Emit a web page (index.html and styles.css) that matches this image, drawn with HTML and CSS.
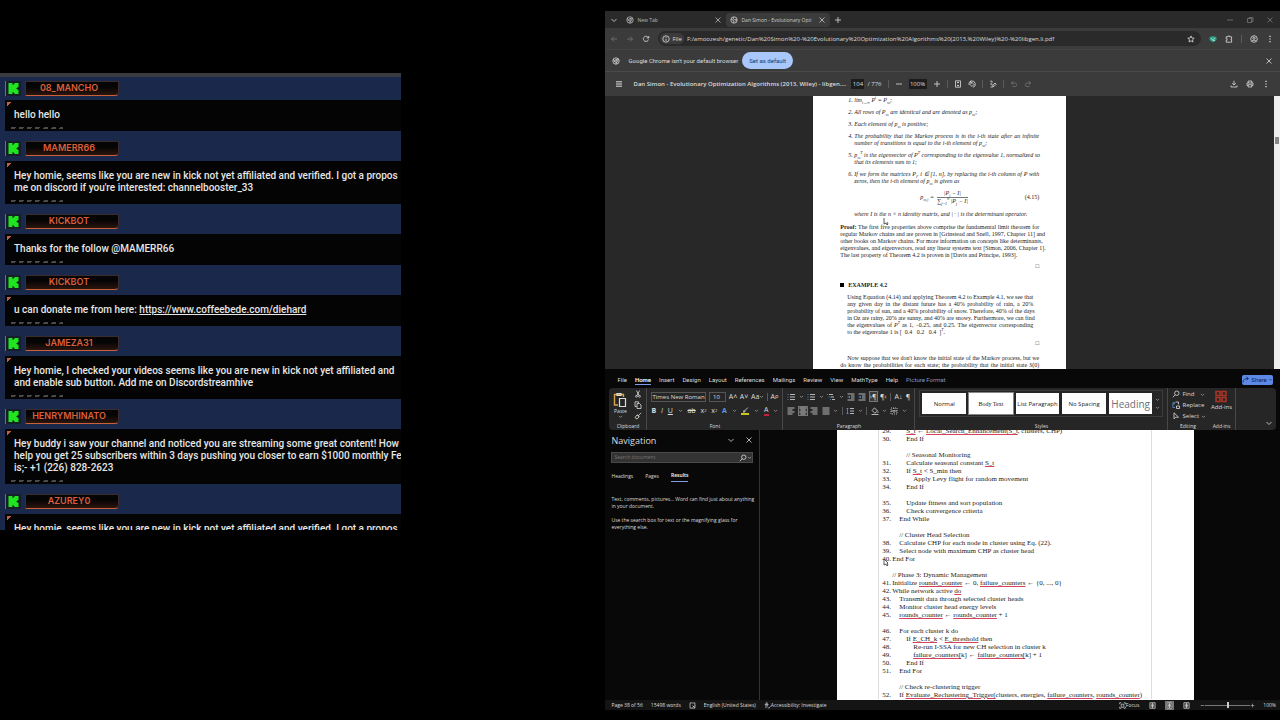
FILE: index.html
```html
<!DOCTYPE html>
<html lang="en">
<head>
    <meta charset="UTF-8">
    <meta name="viewport" content="width=device-width, initial-scale=1.0">
    <title>Stream Layout</title>
    <link rel="stylesheet" href="styles.css">
</head>
<body>
    <svg class="sprite" aria-hidden="true">
        <symbol id="kick" viewBox="0 0 10 11"><path fill="#1fe51f" stroke="none" d="M0 0h4v2h1V1h1V0h4v4H9v1H8v1h1v1h1v4H6v-1H5V9H4v2H0z"/></symbol>
        <symbol id="down" viewBox="0 0 8 8"><path d="M1.500 3l2.500 2.500L6.500 3"/></symbol>
        <symbol id="close" viewBox="0 0 8 8"><path d="M1.500 1.500l5 5M6.500 1.500l-5 5"/></symbol>
        <symbol id="plus" viewBox="0 0 8 8"><path d="M4 1v6M1 4h6"/></symbol>
        <symbol id="minus" viewBox="0 0 8 8"><path d="M1 4h6"/></symbol>
        <symbol id="restore" viewBox="0 0 8 8"><path d="M1.500 2.500h4v4h-4zM3 2.500v-1h4v4H5.500"/></symbol>
        <symbol id="chrome" viewBox="0 0 8 8"><circle cx="4" cy="4" r="3.200"/><circle cx="4" cy="4" r="1.300"/><path d="M4 2.700h2.900M2.900 4.700L1.300 2.200M5.100 4.700L3.800 7.200"/></symbol>
        <symbol id="globe" viewBox="0 0 8 8"><circle cx="4" cy="4" r="3.200"/><path d="M1 3.500l2 .5 1 1-.5 2M4 1l-1 1.500 1.500 1L7 3M5 5l2-.5"/></symbol>
        <symbol id="back" viewBox="0 0 8 8"><path d="M7 4H1.500M4 1.500L1.500 4 4 6.500"/></symbol>
        <symbol id="forward" viewBox="0 0 8 8"><path d="M1 4h5.500M4 1.500L6.500 4 4 6.500"/></symbol>
        <symbol id="reload" viewBox="0 0 8 8"><path d="M6.500 4.500A2.600 2.600 0 1 1 5.800 2L6.700 3M6.800 1v2H4.800"/></symbol>
        <symbol id="info" viewBox="0 0 8 8"><circle cx="4" cy="4" r="3.200"/><path d="M4 3.700V6M4 2v.8"/></symbol>
        <symbol id="star" viewBox="0 0 8 8"><path d="M4 .9l.9 2.100 2.300.2-1.700 1.500.5 2.300-2-1.200L2 7l.5-2.300L.8 3.200l2.300-.2z"/></symbol>
        <symbol id="idm" viewBox="0 0 8 8"><path fill="#2f9c84" stroke="none" d="M.5 2L4 1l3.500 1v3L4 7.500.5 5z"/><path stroke="#b9e5dc" d="M2 3l1.500 2L6 3M4 5.500h2"/></symbol>
        <symbol id="puzzle" viewBox="0 0 8 8"><path d="M1.200 1.800h1.800V1h1.600v.8h2V4H6v1h.6v2.200H1.200V5.300h.9V3.800h-.9z"/></symbol>
        <symbol id="user" viewBox="0 0 8 8"><circle cx="4" cy="4" r="3.300"/><circle cx="4" cy="3.200" r="1.100"/><path d="M1.800 6.300c1-1.500 3.400-1.500 4.400 0"/></symbol>
        <symbol id="dots" viewBox="0 0 8 8"><path stroke-width="1.300" d="M4 .8v1.200M4 3.400v1.200M4 6v1.200"/></symbol>
        <symbol id="menu" viewBox="0 0 8 8"><path stroke-width="1" d="M1 1.800h6M1 4h6M1 6.200h6"/></symbol>
        <symbol id="fit" viewBox="0 0 8 8"><path d="M1.500.8h5v6.400h-5zM4 1.800v1.400M4 4.800v1.400M3 3l1-1 1 1M3 5l1 1 1-1"/></symbol>
        <symbol id="rotate" viewBox="0 0 8 8"><path d="M4 2.500L6 4.500 4 6.500 2 4.500zM1 5a3.200 3.200 0 1 1 4 2.300M3.200.5L2 2l2 1"/></symbol>
        <symbol id="draw" viewBox="0 0 8 8"><path d="M1 1.500c2-1 3 0 1.500 1.500S2 5 3.500 4.500M3.500 6.800L4 5l2-2 1.200 1.200-2 2zM1.500 7h2"/></symbol>
        <symbol id="undo" viewBox="0 0 8 8"><path d="M3 1.200L1.300 3 3 4.800M1.300 3H5c2.200 0 2.200 3.500 0 3.500H2.500"/></symbol>
        <symbol id="redo" viewBox="0 0 8 8"><path d="M5 1.200L6.700 3 5 4.800M6.700 3H3C.8 3 .8 6.500 3 6.500h2.500"/></symbol>
        <symbol id="download" viewBox="0 0 8 8"><path d="M4 .8v4M2.200 3.200L4 5l1.800-1.800M1 5.500V7h6V5.500"/></symbol>
        <symbol id="print" viewBox="0 0 8 8"><path d="M2.200 3V1h3.600v2M2.200 5.500H1V3h6v2.500H5.800M2.200 4.700h3.600V7H2.200z"/></symbol>
        <symbol id="paste" viewBox="0 0 14 16"><path stroke="#d7a64a" stroke-width="1.400" d="M5 13H1.500V2.500h9V5"/><path stroke-width="1.200" d="M4 3.500v-2h4v2zM6.500 6.500h6v8h-6z"/></symbol>
        <symbol id="cut" viewBox="0 0 8 8"><path d="M2.500.5l2.500 5M5.500.5L3 5.500"/><circle cx="2.500" cy="6.300" r=".9"/><circle cx="5.500" cy="6.300" r=".9"/></symbol>
        <symbol id="copy" viewBox="0 0 8 8"><path d="M2.500 5.500H1V.8h3.500V2M3 2.500h2.500L7 4v3.500H3z"/></symbol>
        <symbol id="brush" viewBox="0 0 8 8"><path d="M7.200.8L5 3M3.500 2.500l2 2M3 3L1 5.500 3 7l2-2z"/><path stroke="#d7a64a" d="M1.500 6L3 7"/></symbol>
        <symbol id="list" viewBox="0 0 8 8"><path d="M3 1.500h5M3 4h5M3 6.500h5"/><path stroke="#5b93d6" d="M.5 1.500h1M.5 4h1M.5 6.500h1"/></symbol>
        <symbol id="levels" viewBox="0 0 8 8"><path d="M2 1.500h4M3.500 4H7M5 6.500h3"/><path stroke="#5b93d6" d="M0 1.500h1M1.500 4h1M3 6.500h1"/></symbol>
        <symbol id="indent" viewBox="0 0 8 8"><path d="M.5 1h7M4 3h3.500M4 5h3.500M.5 7h7"/><path stroke="#5b93d6" d="M.5 4H3M2 3l1 1-1 1"/></symbol>
        <symbol id="left" viewBox="0 0 8 8"><path d="M.5 1h7M.5 3h5M.5 5h7M.5 7h5"/></symbol>
        <symbol id="center" viewBox="0 0 8 8"><path d="M.5 1h7M1.500 3h5M.5 5h7M1.500 7h5"/></symbol>
        <symbol id="right" viewBox="0 0 8 8"><path d="M.5 1h7M2.500 3h5M.5 5h7M2.500 7h5"/></symbol>
        <symbol id="justify" viewBox="0 0 8 8"><path d="M.5 1h7M.5 3h7M.5 5h7M.5 7h7"/></symbol>
        <symbol id="spacing" viewBox="0 0 8 8"><path d="M4 1.500h4M4 4h4M4 6.500h4"/><path stroke="#5b93d6" d="M1.500 1v6M.5 2l1-1 1 1M.5 6l1 1 1-1"/></symbol>
        <symbol id="bucket" viewBox="0 0 8 8"><path d="M3.500.8L6.500 4 3.800 6.200 1.200 3.500zM7 4.500v1.300M.5 7.500h7"/></symbol>
        <symbol id="borders" viewBox="0 0 8 8"><path stroke-dasharray="1 1" d="M1 1h6v6H1zM4 1v6"/><path d="M1 4h6"/></symbol>
        <symbol id="pen" viewBox="0 0 8 8"><path d="M6.800.6L3.500 4M3 3.500l1.200 1.200L2.500 5.300z"/><path stroke="#f2f21a" stroke-width="1.600" d="M0 7h8"/></symbol>
        <symbol id="search" viewBox="0 0 8 8"><circle cx="4.800" cy="3.200" r="2.200"/><path d="M3.200 4.800L.8 7.200"/></symbol>
        <symbol id="replace" viewBox="0 0 8 8"><path d="M3.500 1h3v2.500M4.500 5h3v2.500h-3z"/><path stroke="#5b93d6" d="M.8 3v3.500H3M1 1.500h1.500V3H1z"/></symbol>
        <symbol id="pointer" viewBox="0 0 8 8"><path d="M2 .8v6L3.800 5.200H6.500z"/></symbol>
        <symbol id="addins" viewBox="0 0 12 12"><path stroke="#a93426" stroke-width="1.600" d="M1 1h4v4H1zM7 1h4v4H7zM1 7h4v4H1zM7 7h4v4H7z"/></symbol>
        <symbol id="share" viewBox="0 0 8 8"><path d="M1 6.500c0-3 2-4 5-4M4.500.8l2 1.700-2 1.700"/></symbol>
        <symbol id="proof" viewBox="0 0 8 8"><path d="M1.200 1h2.500l.8.500.8-.5h1.500v6H1.200zM4 4l2.500 2.500M6.500 4L4 6.500"/></symbol>
        <symbol id="access" viewBox="0 0 8 8"><circle cx="3" cy="1.500" r=".8"/><path d="M.8 3h4.400M2.300 3v4M3.800 3v2M4.500 6l1 1.200L7.500 5"/></symbol>
        <symbol id="focus" viewBox="0 0 8 8"><path d="M.8 2.500V.8h1.700M5.500.8h1.700v1.700M7.200 5.500v1.700H5.500M2.500 7.200H.8V5.500M2.500 2.500h3v3.500h-3z"/></symbol>
        <symbol id="page" viewBox="0 0 8 8"><path d="M1 .8h6v6.400H1zM4 1v6M2 2.500h4M2 4h4M2 5.500h4"/></symbol>
    </svg>

    <main class="stage">
        <section class="chat" aria-label="Chat">
            <article class="message">
                <header><svg class="kick"><use href="#kick"/></svg><h2>08_MANCHO</h2></header>
                <p>hello hello</p>
            </article>
            <article class="message">
                <header><svg class="kick"><use href="#kick"/></svg><h2>MAMERR66</h2></header>
                <p>Hey homie, seems like you are new in kick not yet affiliated and verified. I got a propos<br>me on discord if you're interested: channelbooster_33</p>
            </article>
            <article class="message">
                <header><svg class="kick"><use href="#kick"/></svg><h2>KICKBOT</h2></header>
                <p>Thanks for the follow @MAMERR66</p>
            </article>
            <article class="message">
                <header><svg class="kick"><use href="#kick"/></svg><h2>KICKBOT</h2></header>
                <p>u can donate me from here: <a href="https://www.coffeebede.com/diehard">https://www.coffeebede.com/diehard</a></p>
            </article>
            <article class="message">
                <header><svg class="kick"><use href="#kick"/></svg><h2>JAMEZA31</h2></header>
                <p>Hey homie, I checked your videos seems like you are new in kick not yet affiliated and<br>and enable sub button. Add me on Discordstreamhive</p>
            </article>
            <article class="message">
                <header><svg class="kick"><use href="#kick"/></svg><h2>HENRYMHINATO</h2></header>
                <p>Hey buddy i saw your channel and noticed you are streaming some great content! How<br>help you get 25 subscribers within 3 days pushing you closer to earn $1000 monthly Fe<br>is;- +1 (226) 828-2623</p>
            </article>
            <article class="message">
                <header><svg class="kick"><use href="#kick"/></svg><h2>AZUREY0</h2></header>
                <p>Hey homie, seems like you are new in kick not yet affiliated and verified. I got a propos</p>
            </article>
        </section>

        <div class="desktop">
            <section class="browser" aria-label="Browser">
                <div class="tab-strip">
                    <button class="tab-search" aria-label="Search tabs"><svg><use href="#down"/></svg></button>
                    <div class="tab"><svg><use href="#chrome"/></svg><span>New Tab</span><button aria-label="Close tab"><svg><use href="#close"/></svg></button></div>
                    <div class="tab active"><svg><use href="#globe"/></svg><span>Dan Simon - Evolutionary Opti</span><button aria-label="Close tab"><svg><use href="#close"/></svg></button></div>
                    <button class="new-tab" aria-label="New tab"><svg><use href="#plus"/></svg></button>
                    <div class="window-buttons">
                        <button aria-label="Minimize"><svg><use href="#minus"/></svg></button>
                        <button aria-label="Restore"><svg><use href="#restore"/></svg></button>
                        <button aria-label="Close"><svg><use href="#close"/></svg></button>
                    </div>
                </div>
                <div class="toolbar">
                    <button class="dim" aria-label="Back"><svg><use href="#back"/></svg></button>
                    <button class="dim" aria-label="Forward"><svg><use href="#forward"/></svg></button>
                    <button aria-label="Reload"><svg><use href="#reload"/></svg></button>
                    <div class="address">
                        <label for="url"><svg><use href="#info"/></svg>File</label>
                        <input id="url" type="text" value="F:/amoozesh/genetic/Dan%20Simon%20-%20Evolutionary%20Optimization%20Algorithms%20(2013,%20Wiley)%20-%20libgen.li.pdf">
                        <button aria-label="Bookmark"><svg><use href="#star"/></svg></button>
                    </div>
                    <button aria-label="Download manager"><svg><use href="#idm"/></svg></button>
                    <button aria-label="Extensions"><svg><use href="#puzzle"/></svg></button>
                    <i class="bar"></i>
                    <button aria-label="Profile"><svg><use href="#user"/></svg></button>
                    <button aria-label="Menu"><svg><use href="#dots"/></svg></button>
                </div>
                <div class="infobar">
                    <svg><use href="#chrome"/></svg>
                    <span>Google Chrome isn't your default browser</span>
                    <button class="default-button">Set as default</button>
                    <button class="end" aria-label="Dismiss"><svg><use href="#close"/></svg></button>
                </div>
                <div class="pdf-bar">
                    <button aria-label="Sidebar"><svg><use href="#menu"/></svg></button>
                    <h1>Dan Simon - Evolutionary Optimization Algorithms (2013, Wiley) - libgen....</h1>
                    <div class="pdf-tools">
                        <input class="page-number" type="text" value="104" aria-label="Page number"><span>/ 776</span>
                        <i class="bar"></i>
                        <button aria-label="Zoom out"><svg><use href="#minus"/></svg></button>
                        <input type="text" value="100%" aria-label="Zoom">
                        <button aria-label="Zoom in"><svg><use href="#plus"/></svg></button>
                        <i class="bar"></i>
                        <button aria-label="Fit to page"><svg><use href="#fit"/></svg></button>
                        <button aria-label="Rotate"><svg><use href="#rotate"/></svg></button>
                        <i class="bar"></i>
                        <button aria-label="Draw"><svg><use href="#draw"/></svg></button>
                        <i class="bar"></i>
                        <button class="dim" aria-label="Undo"><svg><use href="#undo"/></svg></button>
                        <button class="dim" aria-label="Redo"><svg><use href="#redo"/></svg></button>
                    </div>
                    <div class="pdf-actions">
                        <button aria-label="Download"><svg><use href="#download"/></svg></button>
                        <button aria-label="Print"><svg><use href="#print"/></svg></button>
                        <button aria-label="More"><svg><use href="#dots"/></svg></button>
                    </div>
                </div>
                <div class="pdf-view">
                    <div class="pdf-page">
                        <ol>
                            <li>lim<sub>i→∞</sub> P<sup>i</sup> = P<sub>ss</sub>;</li>
                            <li>All rows of P<sub>ss</sub> are identical and are denoted as p<sub>ss</sub>;</li>
                            <li>Each element of p<sub>ss</sub> is positive;</li>
                            <li><span class="full">The probability that the Markov process is in the i-th state after an infinite</span>number of transitions is equal to the i-th element of p<sub>ss</sub>;</li>
                            <li><span class="full">p<sub>ss</sub><sup>T</sup> is the eigenvector of P<sup>T</sup> corresponding to the eigenvalue 1, normalized so</span>that its elements sum to 1;</li>
                            <li><span class="full">If we form the matrices P<sub>i</sub>, i ∈ [1, n], by replacing the i-th column of P with</span>zeros, then the i-th element of p<sub>ss</sub> is given as</li>
                        </ol>
                        <div class="equation">
                            <em>p<sub>ss,i</sub> =</em>
                            <em class="fraction"><span>|P<sub>i</sub> − I|</span><span>∑<sub>j=1</sub><sup>n</sup> |P<sub>j</sub> − I|</span></em>
                            <span class="number">(4.15)</span>
                        </div>
                        <p class="where">where I is the n × n identity matrix, and | · | is the determinant operator.</p>
                        <p>
                            <span class="full"><b>Proof:</b> The first five properties above comprise the fundamental limit theorem for</span>
                            <span class="full">regular Markov chains and are proven in [Grinstead and Snell, 1997, Chapter 11] and</span>
                            <span class="full">other books on Markov chains. For more information on concepts like determinants,</span>
                            <span class="full">eigenvalues, and eigenvectors, read any linear systems text [Simon, 2006, Chapter 1].</span>
                            The last property of Theorem 4.2 is proven in [Davis and Principe, 1993].
                        </p>
                        <div class="qed">□</div>
                        <h3>EXAMPLE 4.2</h3>
                        <p class="example">
                            <span class="full">Using Equation (4.14) and applying Theorem 4.2 to Example 4.1, we see that</span>
                            <span class="full">any given day in the distant future has a 40% probability of rain, a 20%</span>
                            <span class="full">probability of sun, and a 40% probability of snow. Therefore, 40% of the days</span>
                            <span class="full">in Oz are rainy, 20% are sunny, and 40% are snowy. Furthermore, we can find</span>
                            <span class="full">the eigenvalues of <em>P<sup>T</sup></em> as 1, −0.25, and 0.25. The eigenvector corresponding</span>
                            to the eigenvalue 1 is [ &nbsp;0.4 &nbsp; 0.2 &nbsp; 0.4 &nbsp;]<em><sup>T</sup></em>.
                        </p>
                        <div class="qed">□</div>
                        <p>
                            <span class="full indented">Now suppose that we don't know the initial state of the Markov process, but we</span>
                            <span class="full">do know the probabilities for each state; the probability that the initial state <em>S</em>(0)</span>
                        </p>
                        <svg class="cursor beam" viewBox="0 0 6 8"><path d="M1 0v6l2-1 1 2 1-1-1-2"/></svg>
                    </div>
                    <div class="pdf-scroll"><i></i></div>
                </div>
            </section>

            <section class="word" aria-label="Word">
                <nav class="menu">
                    <button>File</button>
                    <button class="current">Home</button>
                    <button>Insert</button>
                    <button>Design</button>
                    <button>Layout</button>
                    <button>References</button>
                    <button>Mailings</button>
                    <button>Review</button>
                    <button>View</button>
                    <button>MathType</button>
                    <button>Help</button>
                    <button class="context">Picture Format</button>
                    <button class="share"><svg><use href="#share"/></svg>Share<svg class="caret"><use href="#down"/></svg></button>
                </nav>
                <div class="ribbon">
                    <div class="group clipboard">
                        <div class="tools">
                            <button class="paste"><svg><use href="#paste"/></svg>Paste<svg class="caret"><use href="#down"/></svg></button>
                            <div class="stack">
                                <button aria-label="Cut"><svg><use href="#cut"/></svg></button>
                                <button aria-label="Copy"><svg><use href="#copy"/></svg></button>
                                <button aria-label="Format painter"><svg><use href="#brush"/></svg></button>
                            </div>
                        </div>
                        <div class="caption">Clipboard</div>
                    </div>
                    <div class="group font">
                        <div class="rows">
                            <div class="row">
                                <select class="family" aria-label="Font"><option>Times New Roman</option></select>
                                <select class="size" aria-label="Font size"><option>10</option></select>
                                <button>A˄</button>
                                <button>A˅</button>
                                <button>Aa<svg class="caret"><use href="#down"/></svg></button>
                                <i class="bar"></i>
                                <button>A<small>ρ</small></button>
                            </div>
                            <div class="row">
                                <button><b>B</b></button>
                                <button><em>I</em></button>
                                <button><u>U</u></button>
                                <svg class="caret"><use href="#down"/></svg>
                                <button><s>ab</s></button>
                                <button>x<sub>2</sub></button>
                                <button>x<sup>2</sup></button>
                                <button class="effects">A</button>
                                <svg class="caret"><use href="#down"/></svg>
                                <button aria-label="Highlight"><svg><use href="#pen"/></svg></button>
                                <svg class="caret"><use href="#down"/></svg>
                                <button class="font-color">A</button>
                                <svg class="caret"><use href="#down"/></svg>
                            </div>
                        </div>
                        <div class="caption">Font</div>
                    </div>
                    <div class="group paragraph">
                        <div class="rows">
                            <div class="row">
                                <button aria-label="Bullets"><svg><use href="#list"/></svg></button>
                                <svg class="caret"><use href="#down"/></svg>
                                <button aria-label="Numbering"><svg><use href="#list"/></svg></button>
                                <svg class="caret"><use href="#down"/></svg>
                                <button aria-label="Multilevel list"><svg><use href="#levels"/></svg></button>
                                <svg class="caret"><use href="#down"/></svg>
                                <button aria-label="Decrease indent"><svg><use href="#indent"/></svg></button>
                                <button aria-label="Increase indent"><svg><use href="#indent"/></svg></button>
                                <button class="pressed">›¶</button>
                                <button>¶‹</button>
                                <i class="bar"></i>
                                <button>A↓</button>
                                <button>¶</button>
                            </div>
                            <div class="row">
                                <button aria-label="Align left"><svg><use href="#left"/></svg></button>
                                <button class="pressed" aria-label="Center"><svg><use href="#center"/></svg></button>
                                <button aria-label="Align right"><svg><use href="#right"/></svg></button>
                                <button aria-label="Justify"><svg><use href="#justify"/></svg></button>
                                <svg class="caret"><use href="#down"/></svg>
                                <i class="bar"></i>
                                <button aria-label="Line spacing"><svg><use href="#spacing"/></svg></button>
                                <svg class="caret"><use href="#down"/></svg>
                                <i class="bar"></i>
                                <button aria-label="Shading"><svg><use href="#bucket"/></svg></button>
                                <svg class="caret"><use href="#down"/></svg>
                                <button aria-label="Borders"><svg><use href="#borders"/></svg></button>
                                <svg class="caret"><use href="#down"/></svg>
                                <i></i>
                            </div>
                        </div>
                        <div class="caption">Paragraph</div>
                    </div>
                    <div class="group styles">
                        <div class="gallery">
                            <button>Normal</button>
                            <button class="serif">Body Text</button>
                            <button>List Paragraph</button>
                            <button>No Spacing</button>
                            <button class="heading">Heading</button>
                            <div class="gallery-scroll">
                                <svg class="caret"><use href="#down"/></svg>
                                <svg class="caret"><use href="#down"/></svg>
                            </div>
                        </div>
                        <div class="caption">Styles</div>
                    </div>
                    <div class="group editing">
                        <div class="stack">
                            <button><svg><use href="#search"/></svg>Find &nbsp;<svg class="caret"><use href="#down"/></svg></button>
                            <button><svg><use href="#replace"/></svg>Replace</button>
                            <button><svg><use href="#pointer"/></svg>Select<svg class="caret"><use href="#down"/></svg></button>
                        </div>
                        <div class="caption">Editing</div>
                    </div>
                    <div class="group addins">
                        <button><svg><use href="#addins"/></svg>Add-ins</button>
                        <div class="caption">Add-ins</div>
                    </div>
                    <button class="collapse" aria-label="Collapse ribbon"><svg><use href="#down"/></svg></button>
                </div>
                <div class="workspace">
                    <aside class="navigation">
                        <div class="title">
                            <h2>Navigation</h2>
                            <button aria-label="Options"><svg><use href="#down"/></svg></button>
                            <button aria-label="Close"><svg><use href="#close"/></svg></button>
                        </div>
                        <div class="search">
                            <input type="text" placeholder="Search document" aria-label="Search document">
                            <button aria-label="Search"><svg><use href="#search"/></svg></button>
                            <svg class="caret"><use href="#down"/></svg>
                        </div>
                        <div class="nav-tabs">
                            <button>Headings</button>
                            <button>Pages</button>
                            <button class="current">Results</button>
                        </div>
                        <p>Text, comments, pictures... Word can find just about anything<br>in your document.</p>
                        <p>Use the search box for text or the magnifying glass for<br>everything else.</p>
                    </aside>
                    <div class="canvas">
                        <div class="sheet">
                            <div class="code">
                                <div class="line in2"><b>29.</b><span><u>S_t</u> ← <u>Local_Search_Enhancement(S_t</u>, clusters, CHP)</span></div>
                                <div class="line in2"><b>30.</b><span>End If</span></div>
                                <div class="line"></div>
                                <div class="line in2"><b></b><span>// Seasonal Monitoring</span></div>
                                <div class="line in2"><b>31.</b><span>Calculate seasonal constant <u>S_t</u></span></div>
                                <div class="line in2"><b>32.</b><span>If <u>S_t</u> &lt; S_min then</span></div>
                                <div class="line in3"><b>33.</b><span>Apply Levy flight for random movement</span></div>
                                <div class="line in2"><b>34.</b><span>End If</span></div>
                                <div class="line"></div>
                                <div class="line in2"><b>35.</b><span>Update fitness and sort population</span></div>
                                <div class="line in2"><b>36.</b><span>Check convergence criteria</span></div>
                                <div class="line in1"><b>37.</b><span>End While</span></div>
                                <div class="line"></div>
                                <div class="line in1"><b></b><span>// Cluster Head Selection</span></div>
                                <div class="line in1"><b>38.</b><span>Calculate CHP for each node in cluster using Eq. (22).</span></div>
                                <div class="line in1"><b>39.</b><span>Select node with maximum CHP as cluster head</span></div>
                                <div class="line"><b>40.</b><span>End For</span></div>
                                <div class="line"></div>
                                <div class="line"><b></b><span>// Phase 3: Dynamic Management</span></div>
                                <div class="line"><b>41.</b><span>Initialize <u>rounds_counter</u> ← 0, <u>failure_counters</u> ← {0, ..., 0}</span></div>
                                <div class="line"><b>42.</b><span>While network active <u>do</u></span></div>
                                <div class="line in1"><b>43.</b><span>Transmit data through selected cluster heads</span></div>
                                <div class="line in1"><b>44.</b><span>Monitor cluster head energy levels</span></div>
                                <div class="line in1"><b>45.</b><span><u>rounds_counter</u> ← <u>rounds_counter</u> + 1</span></div>
                                <div class="line"></div>
                                <div class="line in1"><b>46.</b><span>For each cluster k do</span></div>
                                <div class="line in2"><b>47.</b><span>If <u>E_CH_k</u> &lt; <u>E_threshold</u> then</span></div>
                                <div class="line in3"><b>48.</b><span>Re-run I-SSA for new CH selection in cluster k</span></div>
                                <div class="line in3"><b>49.</b><span><u>failure_counters[</u>k] ← <u>failure_counters[</u>k] + 1</span></div>
                                <div class="line in2"><b>50.</b><span>End If</span></div>
                                <div class="line in1"><b>51.</b><span>End For</span></div>
                                <div class="line"></div>
                                <div class="line in1"><b></b><span>// Check re-clustering trigger</span></div>
                                <div class="line in1"><b>52.</b><span>If <u>Evaluate_Reclustering_Trigger(</u>clusters, energies, <u>failure_counters</u>, <u>rounds_counter</u>)</span></div>
                            </div>
                            <svg class="cursor arrow" viewBox="0 0 6 8"><path d="M1 0v6l2-1 1 2 1-1-1-2h1z"/></svg>
                        </div>
                    </div>
                </div>
                <footer class="status">
                    <span>Page 38 of 56</span>
                    <span>15498 words</span>
                    <svg><use href="#proof"/></svg>
                    <span>English (United States)</span>
                    <span class="with-icon"><svg><use href="#access"/></svg>Accessibility: Investigate</span>
                    <div class="views">
                        <button><svg><use href="#focus"/></svg>Focus</button>
                        <button aria-label="Read mode"><svg><use href="#page"/></svg></button>
                        <button class="pressed" aria-label="Print layout"><svg><use href="#page"/></svg></button>
                        <button aria-label="Web layout"><svg><use href="#page"/></svg></button>
                        <div class="zoom">
                            <button aria-label="Zoom out"><svg class="caret"><use href="#minus"/></svg></button>
                            <input type="range" min="0" max="100" value="50" aria-label="Zoom">
                            <button aria-label="Zoom in"><svg class="caret"><use href="#plus"/></svg></button>
                        </div>
                    </div>
                    <span>100%</span>
                </footer>
            </section>
        </div>
    </main>
</body>
</html>
```
FILE: styles.css
```css
* {
    box-sizing: border-box;
}
body {
    margin: 0;
    background-color: #000;
    color: #ddd;
    font-family: "Open Sans", sans-serif;
    font-size: 6px;
}
h1, h2, h3, p, ol {
    margin: 0;
    padding: 0;
    font-size: inherit;
}
button, input, select {
    margin: 0;
    padding: 0;
    border: 0;
    background: none;
    color: inherit;
    font: inherit;
    min-width: 0;
    appearance: none;
}
button {
    display: flex;
    align-items: center;
    justify-content: center;
    white-space: nowrap;
}
svg {
    width: 8px;
    height: 8px;
    flex: none;
    fill: none;
    stroke: currentColor;
    stroke-width: 0.8;
}
sub, sup {
    font-size: 4px;
    line-height: 0;
}
.sprite {
    position: absolute;
    width: 0;
    height: 0;
}
.stage {
    display: grid;
    grid-template-columns: 401fr 675fr;
    column-gap: 16%;
    height: 100vh;
}

/* chat */
.chat {
    margin: 73px 0 190px;
    border-top: 4px solid #383c41;
    background-color: #1a294b;
    overflow: hidden;
}
.message header {
    display: flex;
    align-items: center;
    height: 30px;
    padding: 5px 0 0 5px;
}
.message:first-child header {
    height: 23px;
    padding-top: 0;
}
.kick {
    width: 16px;
    height: 15px;
    padding: 2px;
    border-left: 1px solid #b5583a;
    background-color: #16202a;
}
.message h2 {
    width: 94px;
    height: 15px;
    margin-left: 4px;
    padding-right: 6px;
    border: 1px solid #3a2c2c;
    border-bottom: 1px solid #c8613a;
    border-radius: 0 0 4px 0;
    background: linear-gradient(#050505 40%, #2b150e);
    color: #dc5f3a;
    font: 600 9px/12px Inter, sans-serif;
    text-align: center;
}
.message p {
    margin-left: 5px;
    padding: 9px 0 10px 9px;
    background:
        linear-gradient(135deg, #c0603f 3px, transparent 3px) 2px 2px / 4px 4px no-repeat,
        repeating-linear-gradient(120deg, transparent 0 3px, #4a4a4a 3px 7px) 3px calc(100% - 2px) / 55px 2px no-repeat,
        #040404;
    color: #e6e6e6;
    font: 500 10px/12px Roboto, sans-serif;
    white-space: nowrap;
}
.message a {
    color: inherit;
}

/* desktop capture */
.desktop {
    display: flex;
    flex-direction: column;
    min-width: 0;
    padding: 11px 0 10px;
}
.browser {
    display: flex;
    flex-direction: column;
    flex: 358 1 0;
    min-height: 0;
    background-color: #3b3b3b;
}
.bar {
    width: 1px;
    height: 8px;
    background-color: #5a5a5a;
}
.dim {
    color: #777;
}
.tab-strip {
    display: flex;
    align-items: center;
    height: 17px;
    padding-left: 5px;
    background-color: #2a2a2a;
    font-size: 5px;
}
.tab {
    display: flex;
    align-items: center;
    gap: 3px;
    width: 104px;
    height: 14px;
    padding: 0 4px;
    border-radius: 4px;
    color: #bbb;
}
.tab.active {
    background-color: #3b3b3b;
    color: #ccc;
}
.tab span {
    flex: 1;
    white-space: nowrap;
}
.tab-search {
    margin-right: 4px;
}
.new-tab {
    margin-left: 4px;
}
.window-buttons {
    display: flex;
    gap: 12px;
    margin-left: auto;
    padding-right: 6px;
    color: #777;
}
.toolbar {
    display: flex;
    align-items: center;
    gap: 8px;
    height: 21px;
    padding: 0 6px 0 5px;
}
.address {
    display: flex;
    flex: 1;
    align-items: center;
    gap: 3px;
    height: 15px;
    padding: 0 6px 0 2px;
    border-radius: 8px;
    background-color: #2a2a2a;
}
.address label {
    display: flex;
    align-items: center;
    gap: 2px;
    height: 11px;
    padding: 0 2px;
    border-radius: 6px;
    background-color: #3b3b3b;
}
.address input {
    flex: 1;
}
.infobar {
    display: flex;
    align-items: center;
    height: 23px;
    padding: 0 7px;
    border-bottom: 1px solid #4a4a4a;
    border-top: 1px solid #444;
    font-family: Roboto, sans-serif;
}
.infobar span {
    margin: 0 4px 0 8px;
}
.default-button {
    height: 17px;
    padding: 0 7px;
    border-radius: 9px;
    background-color: #a8c7fa;
    color: #173a70;
}
.infobar .end {
    margin-left: auto;
}
.pdf-bar {
    display: grid;
    grid-template-columns: 10px 209px 1fr auto;
    align-items: center;
    column-gap: 9px;
    height: 24px;
    padding: 0 10px 0 9px;
}
.pdf-bar h1 {
    font-weight: 600;
    white-space: nowrap;
}
.pdf-tools, .pdf-actions {
    display: flex;
    align-items: center;
    gap: 6px;
}
.pdf-actions {
    gap: 8px;
}
.pdf-tools input {
    width: 18px;
    height: 10px;
    background-color: #1c1c1c;
    text-align: center;
}
.pdf-tools .page-number {
    width: 13px;
    margin-right: -3px;
}
.pdf-view {
    display: flex;
    flex: 1;
    min-height: 0;
    justify-content: center;
    background-color: #282828;
}
.pdf-page {
    position: relative;
    width: 253px;
    margin: 0 auto;
    padding: 0 27px;
    background-color: #fff;
    color: #222;
    font: 6px/7px "Liberation Serif", serif;
    white-space: nowrap;
    overflow: hidden;
}
.pdf-page ol {
    padding: 1px 0 0 14px;
    font-style: italic;
}
.pdf-page li {
    margin-bottom: 5px;
}
.full {
    display: block;
    text-align: justify;
    text-align-last: justify;
}
.equation {
    display: flex;
    align-items: center;
    gap: 3px;
    margin-bottom: 6px;
    padding-left: 80px;
}
.fraction {
    display: flex;
    flex-direction: column;
    align-items: center;
}
.fraction span:first-child {
    width: 100%;
    border-bottom: 1px solid #777;
    text-align: center;
}
.equation .number {
    margin-left: auto;
}
.where {
    margin-bottom: 6px;
    padding-left: 14px;
    font-style: italic;
}
.qed {
    margin: 4px 0 8px;
    text-align: right;
}
.pdf-page h3 {
    margin: 12px 0 5px;
    font-weight: bold;
}
.pdf-page h3::before {
    content: "";
    display: inline-block;
    width: 4px;
    height: 4px;
    margin-right: 4px;
    background-color: #000;
}
.example {
    padding: 0 6px 0 7px;
}
.indented {
    padding-left: 7px;
}
.pdf-scroll {
    width: 6px;
    padding: 41px 1px 0;
    background-color: #eee;
}
.pdf-scroll i {
    display: block;
    height: 7px;
    background-color: #888;
}
.cursor {
    position: absolute;
    width: 6px;
    height: 8px;
    fill: #fff;
    stroke: #333;
}
.beam {
    left: 70px;
    top: 122px;
}
.arrow {
    left: 46px;
    top: 129px;
}

/* word */
.word {
    display: flex;
    flex-direction: column;
    flex: 341 1 0;
    min-height: 0;
    background-color: #080808;
}
.menu {
    display: flex;
    align-items: center;
    gap: 8px;
    height: 19px;
    padding: 2px 7px 0 12px;
    font-family: Roboto, sans-serif;
}
.menu button {
    height: 10px;
}
.menu .current, .nav-tabs .current {
    border-bottom: 1px solid #7f9bea;
    color: #fff;
    font-weight: 600;
}
.menu .context {
    color: #8f93bd;
}
.menu .share {
    gap: 1px;
    width: 31px;
    margin-left: auto;
    border-radius: 2px;
    background-color: #5c88e6;
    color: #102047;
}
.caret {
    width: 5px;
    height: 5px;
}
.ribbon {
    display: flex;
    height: 42px;
    margin: 0 4px;
    border-radius: 4px;
    background-color: #262626;
}
.group {
    display: flex;
    flex-direction: column;
    justify-content: space-between;
    padding: 2px 4px 1px;
    border-right: 1px solid #484848;
}
.caption {
    font-size: 5px;
    line-height: 6px;
    text-align: center;
}
.clipboard {
    width: 38px;
}
.tools {
    display: flex;
    justify-content: space-between;
}
.stack {
    display: flex;
    flex-direction: column;
    gap: 3px;
}
.stack button {
    justify-content: flex-start;
    gap: 2px;
    height: 8px;
}
.paste {
    flex-direction: column;
    font-size: 5px;
    line-height: 6px;
}
.paste svg:first-child {
    width: 14px;
    height: 16px;
}
.rows {
    display: flex;
    flex-direction: column;
    gap: 3px;
    padding-top: 1px;
}
.row {
    display: flex;
    align-items: center;
    justify-content: space-between;
    height: 11px;
}
.row button {
    font-size: 7px;
    line-height: 9px;
}
.font {
    width: 136px;
}
.paragraph {
    width: 132px;
}
.row select {
    height: 10px;
    border: 1px solid #555;
    font-size: 6px;
    line-height: 8px;
}
.family {
    width: 55px;
}
.size {
    width: 17px;
    padding-left: 3px;
}
.pressed {
    outline: 1px solid #777;
    background-color: #3a3a3a;
}
.effects {
    color: #5b9be6;
    font-weight: bold;
}
.font-color {
    border-bottom: 2px solid #c0203c;
}
.styles {
    width: 253px;
}
.gallery {
    display: flex;
    gap: 3px;
    padding: 2px;
    border: 1px solid #3c3c3c;
}
.gallery button {
    flex: 1 1 0;
    height: 21px;
    background-color: #fff;
    color: #222;
}
.gallery .serif {
    outline: 1px solid #888;
    font-family: "Liberation Serif", serif;
}
.gallery .heading {
    color: #6a7078;
    font-size: 10px;
}
.gallery-scroll {
    display: flex;
    flex-direction: column;
    justify-content: space-evenly;
}
.editing {
    width: 39px;
    border: 0;
}
.addins {
    width: 29px;
}
.addins button {
    flex-direction: column;
}
.addins button svg {
    width: 12px;
    height: 13px;
}
.collapse {
    margin: auto 3px 3px auto;
}
.workspace {
    display: flex;
    flex: 1;
    min-height: 0;
}
.navigation {
    width: 155px;
    padding: 3px 6px;
    border-right: 1px solid #333;
    font-size: 5px;
    line-height: 7px;
    white-space: nowrap;
}
.title {
    display: flex;
    align-items: center;
    gap: 10px;
    height: 14px;
}
.title h2 {
    flex: 1;
    font-size: 9px;
    font-weight: normal;
}
.search {
    display: flex;
    align-items: center;
    height: 11px;
    margin: 5px 0 7px;
    border: 1px solid #4a4a4a;
    background-color: #333;
}
.search input {
    flex: 1;
    padding-left: 2px;
}
.nav-tabs {
    display: flex;
    gap: 12px;
    height: 12px;
    margin-bottom: 14px;
}
.navigation p {
    margin-bottom: 7px;
}
.canvas {
    display: flex;
    flex: 1;
    justify-content: center;
    padding-right: 9px;
    overflow: hidden;
}
.sheet {
    position: relative;
    width: 357px;
    padding: 0 42px 0 41px;
    background-color: #fff;
    overflow: hidden;
}
.code {
    margin-top: -3px;
    padding-left: 3px;
    border: solid #ddd;
    border-width: 0 1px;
    color: #222;
    font: 7px/8px "Liberation Serif", serif;
    white-space: nowrap;
}
.line {
    display: flex;
    height: 8px;
}
.line b {
    width: 10px;
    font-weight: normal;
}
.line u {
    text-decoration: underline 1px #d8405c;
}
.in1 span {
    padding-left: 7px;
}
.in2 span {
    padding-left: 14px;
}
.in3 span {
    padding-left: 21px;
}
.status {
    display: flex;
    align-items: center;
    gap: 8px;
    height: 10px;
    padding: 0 4px 0 6px;
    background-color: #141414;
    font-size: 5px;
    white-space: nowrap;
}
.status svg {
    width: 7px;
    height: 7px;
}
.with-icon, .views, .views button, .zoom {
    display: flex;
    align-items: center;
}
.views {
    gap: 10px;
    margin-left: auto;
}
.status .zoom svg {
    width: 5px;
    height: 5px;
}
.zoom input {
    width: 45px;
    height: 6px;
    background: linear-gradient(#777, #777) center / 100% 1px no-repeat;
}
.zoom input::-webkit-slider-thumb {
    width: 2px;
    height: 6px;
    background-color: #ccc;
    appearance: none;
}
```
